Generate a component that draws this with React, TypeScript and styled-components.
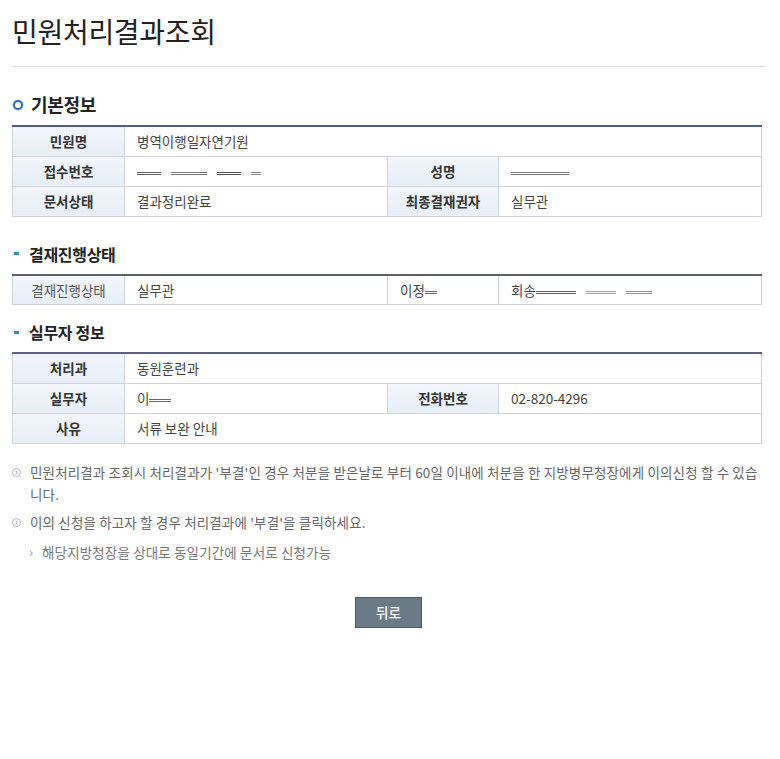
import React from 'react';
import styled, { createGlobalStyle } from 'styled-components';

const GlobalStyle = createGlobalStyle`
  html, body {
    margin: 0;
    padding: 0;
    background: #fff;
  }
  body {
    font-family: "Noto Sans CJK KR", "Noto Sans", sans-serif;
    color: #333;
  }
`;

const Page = styled.div`
  width: 780px;
  padding: 10px 15px 40px 12px;
  box-sizing: border-box;
`;

const Title = styled.h1`
  margin: 0;
  font-size: 28px;
  font-weight: 400;
  line-height: 42px;
  color: #222;
  letter-spacing: -0.3px;
  padding-bottom: 14px;
  border-bottom: 1px solid #dcdcdc;
`;

const Section = styled.section<{ $top: number }>`
  margin-top: ${(p) => p.$top}px;
`;

const Heading = styled.h2`
  margin: 0 0 8px;
  display: flex;
  align-items: center;
  gap: 8px;
  font-size: 18px;
  font-weight: 700;
  line-height: 25px;
  color: #222;
  letter-spacing: -0.3px;
`;

const SubHeading = styled(Heading)`
  font-size: 16px;
  gap: 10px;
  line-height: 24px;
  margin-bottom: 8px;
`;

const Ring = styled.span`
  width: 6px;
  height: 6px;
  border-radius: 50%;
  border: 2.5px solid #2f6db5;
  box-shadow: 0 0 0 0.5px #8fb0da;
  margin-left: 1px;
`;

const Dash = styled.span`
  width: 5px;
  height: 3px;
  background: #2d8fb4;
  margin-left: 2px;
`;

const Table = styled.table<{ $line: string }>`
  width: 750px;
  border-collapse: collapse;
  table-layout: fixed;
  border-top: 2px solid ${(p) => p.$line};
  font-size: 13.5px;
`;

const Row = styled.tr`
  height: 30px;
`;

const Label = styled.th<{ $light?: boolean }>`
  border: 1px solid #cfd3d8;
  background: linear-gradient(180deg, #f3f6fb 0%, #e7eef7 100%);
  color: ${(p) => (p.$light ? '#555' : '#333')};
  font-weight: ${(p) => (p.$light ? 400 : 600)};
  text-align: center;
  padding: 0 6px;
  font-size: 13.5px;
`;

const Value = styled.td`
  border: 1px solid #cfd3d8;
  background: #fff;
  color: #444;
  padding: 0 12px;
  text-align: left;
  white-space: nowrap;
  overflow: hidden;
`;

const Masked = styled.span<{ $w: number; $tone: string }>`
  display: inline-block;
  width: ${(p) => p.$w}px;
  height: 5px;
  margin-right: 10px;
  vertical-align: middle;
  background: linear-gradient(180deg, transparent 0 1px, ${(p) => p.$tone} 1px 2px, transparent 2px 3px, ${(p) => p.$tone} 3px 4px, transparent 4px);
  opacity: 0.8;
`;

const Notes = styled.ul`
  list-style: none;
  margin: 17px 0 0;
  padding: 0;
  font-size: 13.5px;
  color: #666;
  line-height: 22px;
  letter-spacing: 0.15px;
`;

const Note = styled.li`
  position: relative;
  padding-left: 18px;
  margin-bottom: 6px;
`;

const NoteIcon = styled.svg`
  position: absolute;
  left: 0;
  top: 7px;
`;

const SubNote = styled.li`
  position: relative;
  padding-left: 30px;
  margin-top: 8px;
  color: #777;
  &::before {
    content: '›';
    position: absolute;
    left: 17px;
    top: -1px;
    color: #999;
  }
`;

const Actions = styled.div`
  display: flex;
  justify-content: center;
  margin-top: 34px;
`;

const BackButton = styled.button`
  width: 67px;
  height: 31px;
  background: #6b7a87;
  border: 1px solid #4e5963;
  color: #fff;
  font-family: inherit;
  font-size: 13.5px;
  font-weight: 500;
  cursor: pointer;
`;

const CircleArrow = () => (
  <NoteIcon width="9" height="9" viewBox="0 0 9 9">
    <circle cx="4.5" cy="4.5" r="4" fill="none" stroke="#aaa" strokeWidth="0.9" />
    <path d="M3.6 2.8 L5.3 4.5 L3.6 6.2" fill="none" stroke="#888" strokeWidth="0.9" />
  </NoteIcon>
);

const Cols = () => (
  <colgroup>
    <col style={{ width: 112 }} />
    <col style={{ width: 263 }} />
    <col style={{ width: 111 }} />
    <col />
  </colgroup>
);

export default function App() {
  return (
    <Page>
      <GlobalStyle />
      <Title>민원처리결과조회</Title>

      <Section $top={25}>
        <Heading>
          <Ring />
          기본정보
        </Heading>
        <Table $line="#4e5b8e">
          <Cols />
          <tbody>
            <Row>
              <Label>민원명</Label>
              <Value colSpan={3}>병역이행일자연기원</Value>
            </Row>
            <Row>
              <Label>접수번호</Label>
              <Value>
                <Masked $w={24} $tone="#333" />
                <Masked $w={36} $tone="#555" />
                <Masked $w={24} $tone="#222" />
                <Masked $w={10} $tone="#666" />
              </Value>
              <Label>성명</Label>
              <Value>
                <Masked $w={58} $tone="#555" />
              </Value>
            </Row>
            <Row>
              <Label>문서상태</Label>
              <Value>결과정리완료</Value>
              <Label>최종결재권자</Label>
              <Value>실무관</Value>
            </Row>
          </tbody>
        </Table>
      </Section>

      <Section $top={25}>
        <SubHeading>
          <Dash />
          결재진행상태
        </SubHeading>
        <Table $line="#5d6366">
          <Cols />
          <tbody>
            <Row>
              <Label $light>결재진행상태</Label>
              <Value>실무관</Value>
              <Value>
                이정
                <Masked $w={12} $tone="#444" />
              </Value>
              <Value>
                회송
                <Masked $w={40} $tone="#333" />
                <Masked $w={30} $tone="#888" />
                <Masked $w={26} $tone="#777" />
              </Value>
            </Row>
          </tbody>
        </Table>
      </Section>

      <Section $top={15}>
        <SubHeading>
          <Dash />
          실무자 정보
        </SubHeading>
        <Table $line="#5d5f86">
          <Cols />
          <tbody>
            <Row>
              <Label>처리과</Label>
              <Value colSpan={3}>동원훈련과</Value>
            </Row>
            <Row>
              <Label>실무자</Label>
              <Value>
                이
                <Masked $w={22} $tone="#444" />
              </Value>
              <Label>전화번호</Label>
              <Value>02-820-4296</Value>
            </Row>
            <Row>
              <Label>사유</Label>
              <Value colSpan={3}>서류 보완 안내</Value>
            </Row>
          </tbody>
        </Table>
      </Section>

      <Notes>
        <Note>
          <CircleArrow />
          민원처리결과 조회시 처리결과가 '부결'인 경우 처분을 받은날로 부터 60일 이내에 처분을 한 지방병무청장에게 이의신청 할 수 있습니다.
        </Note>
        <Note>
          <CircleArrow />
          이의 신청을 하고자 할 경우 처리결과에 '부결'을 클릭하세요.
        </Note>
        <SubNote>해당지방청장을 상대로 동일기간에 문서로 신청가능</SubNote>
      </Notes>

      <Actions>
        <BackButton type="button">뒤로</BackButton>
      </Actions>
    </Page>
  );
}
